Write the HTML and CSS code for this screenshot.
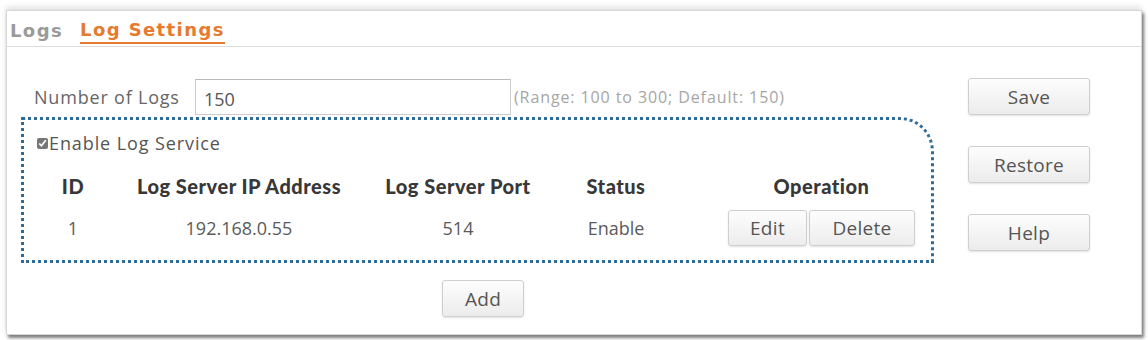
FILE: index.html
```html
<!DOCTYPE html>
<html lang="en">
<head>
    <meta charset="UTF-8">
    <title>Log Settings</title>
    <link rel="stylesheet" href="styles.css">
</head>
<body>
    <div class="panel">
        <div class="tabs">
            <span class="tab">Logs</span>
            <span class="tab active">Log Settings</span>
        </div>
        <div class="content">
            <div class="main">
                <div class="field-row">
                    <label class="field-label">Number of Logs</label>
                    <input class="text-input" type="text" value="150">
                    <span class="hint">(Range: 100 to 300; Default: 150)</span>
                </div>
                <div class="service-box">
                    <label class="check"><input type="checkbox" checked>Enable Log Service</label>
                    <div class="grid head">
                        <span>ID</span>
                        <span>Log Server IP Address</span>
                        <span>Log Server Port</span>
                        <span>Status</span>
                        <span class="ops">Operation</span>
                    </div>
                    <div class="grid row">
                        <span>1</span>
                        <span>192.168.0.55</span>
                        <span>514</span>
                        <span>Enable</span>
                        <span class="ops"><button class="btn btn-edit">Edit</button><button class="btn btn-del">Delete</button></span>
                    </div>
                </div>
                <div class="add-row"><button class="btn btn-add">Add</button></div>
            </div>
            <div class="side">
                <button class="btn btn-side">Save</button>
                <button class="btn btn-side">Restore</button>
                <button class="btn btn-side">Help</button>
            </div>
        </div>
    </div>
</body>
</html>
```
FILE: styles.css
```css
* { margin: 0; padding: 0; box-sizing: border-box; }
body { font-family: 'Open Sans', 'Liberation Sans', sans-serif; background: #fff; width: 1148px; height: 340px; overflow: hidden; }
.panel { margin: 10px 0 0 6px; width: 1136px; height: 325px; background: #fff; border: 1px solid #d6d6d6; box-shadow: 2px 3px 3px #7d7d7d, 0 -3px 6px #e0e0e0; }
.tabs { height: 36px; border-bottom: 1px solid #dcdcdc; display: flex; align-items: flex-end; padding: 0 0 2px 3px; gap: 17px; }
.tab { font-family: 'DejaVu Sans', sans-serif; font-size: 18px; font-weight: bold; color: #9a9a9a; line-height: 26px; letter-spacing: 1.4px; }
.tab.active { color: #e67a2e; border-bottom: 2px solid #e67a2e; line-height: 24px; }
.content { display: flex; }
.main { width: 940px; padding: 32px 0 0 14px; }
.field-row { display: flex; align-items: center; height: 36px; padding-left: 13px; }
.field-label { font-size: 18px; color: #666; width: 161px; letter-spacing: 0.8px; }
.text-input { width: 316px; height: 36px; border: 1px solid #ccc; border-top-color: #bbb; font: 18px 'Open Sans', sans-serif; color: #555; padding: 4px 8px 0; }
.hint { font-size: 16px; color: #a6a6a6; margin-left: 3px; letter-spacing: 0.9px; }
.service-box { width: 913px; height: 146px; margin-top: 2px; border: 3px dotted #2e6c99; border-top-right-radius: 34px; }
.check { display: flex; align-items: center; font-size: 18px; color: #555; margin: 12px 0 0 13px; height: 22px; letter-spacing: 0.9px; }
.check input { width: 11px; height: 11px; margin-right: 1px; accent-color: #777; }
.grid { display: grid; grid-template-columns: 98px 234px 204px 112px 1fr; text-align: center; align-items: center; }
.head { margin-top: 17px; height: 30px; font-family: 'Lato', 'Open Sans', sans-serif; font-weight: 900; font-size: 20px; color: #383838; letter-spacing: 0.5px; }
.row { height: 54px; font-size: 18px; color: #5a5a5a; }
.ops { padding-left: 40px; display: flex; justify-content: center; gap: 2px; }
.head .ops { display: block; }
.btn { font: 19px 'Open Sans', sans-serif; color: #555; background: linear-gradient(#fdfdfd, #ececec); border: 1px solid #cfcfcf; border-radius: 3px; box-shadow: 0 1px 2px rgba(0,0,0,0.12); height: 36px; letter-spacing: 0.3px; }
.btn-edit { width: 79px; }
.btn-del { width: 106px; }
.add-row { padding: 17px 0 0 421px; }
.btn-add { width: 82px; height: 37px; }
.side { display: flex; flex-direction: column; gap: 31px; padding: 31px 0 0 21px; }
.btn-side { width: 122px; height: 37px; }
```
